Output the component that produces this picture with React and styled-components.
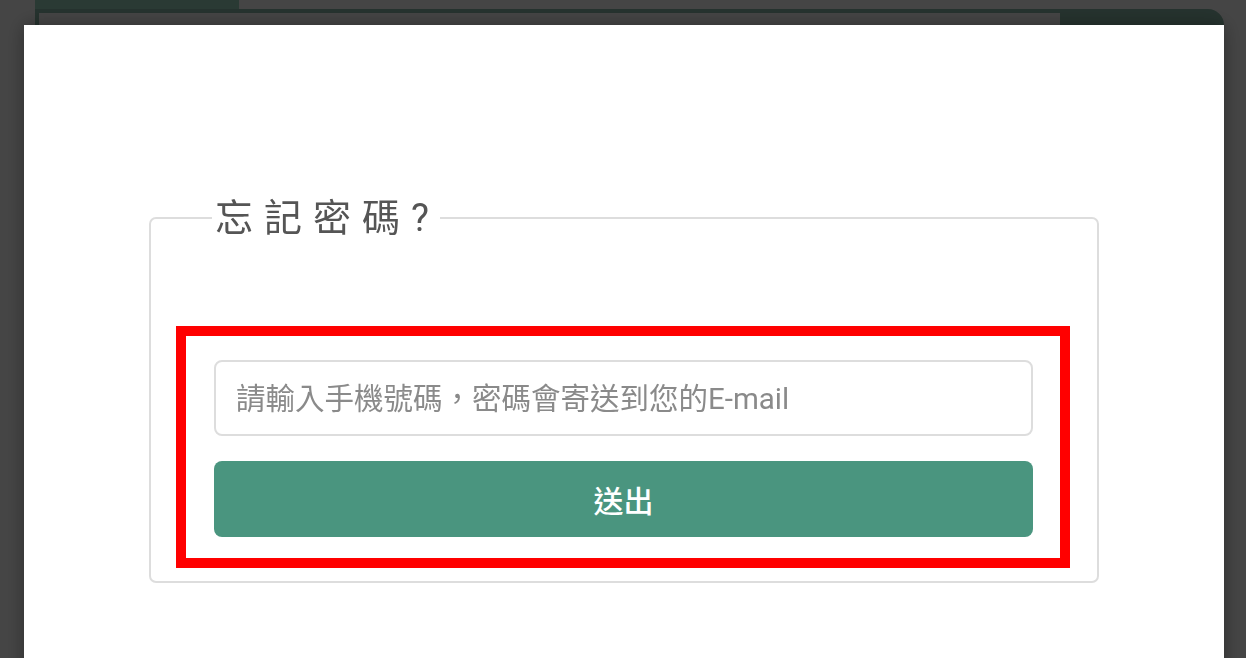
import React from 'react';
import styled, { createGlobalStyle } from 'styled-components';

const GlobalStyle = createGlobalStyle`
  html, body {
    margin: 0;
    padding: 0;
    background: #fff;
    overflow: hidden;
  }
  body {
    font-family: Roboto, 'Noto Sans CJK TC', sans-serif;
  }
`;

export default function App() {
  return (
    <>
      <GlobalStyle />
      <Shell>
        <Sidebar />
        <Main>
          <TopGap />
          <Header>
            <HeaderBar />
          </Header>
        </Main>
      </Shell>
      <Overlay />
      <Modal>
        <Fieldset>
          <Legend>忘記密碼?</Legend>
          <FormBox>
            <Input placeholder="請輸入手機號碼，密碼會寄送到您的E-mail" />
            <Submit type="button">送出</Submit>
          </FormBox>
        </Fieldset>
      </Modal>
    </>
  );
}

const Shell = styled.div`
  display: flex;
  height: 100vh;
  margin-left: 35px;
  width: 1189px;
`;

const Sidebar = styled.div`
  width: 204px;
  background: #9dd6c1;
`;

const Main = styled.div`
  flex: 1;
  display: flex;
  flex-direction: column;
`;

const TopGap = styled.div`
  height: 9px;
`;

const Header = styled.div`
  display: flex;
  background: #8cbcab;
  border-top-right-radius: 16px;
  padding-top: 4px;
  height: 60px;
  margin-left: -204px;
  padding-left: 4px;
`;

const HeaderBar = styled.div`
  width: 1021px;
  height: 100%;
  background: #fff;
`;

const Overlay = styled.div`
  position: fixed;
  inset: 0;
  background: rgba(0, 0, 0, 0.73);
`;

const Modal = styled.div`
  position: fixed;
  left: 24px;
  top: 25px;
  width: 1200px;
  bottom: -40px;
  background: #fff;
  box-shadow: 0 0 18px rgba(0, 0, 0, 0.35);
  display: flex;
  flex-direction: column;
  align-items: center;
  padding-top: 171px;
  box-sizing: border-box;
`;

const Fieldset = styled.fieldset`
  width: 950px;
  box-sizing: border-box;
  margin: 0;
  border: 2px solid #dddddd;
  border-radius: 7px;
  padding: 0 0 13px 25px;
`;

const Legend = styled.legend`
  margin-left: 36px;
  padding: 0 0 0 3px;
  font-family: Roboto, 'Noto Sans CJK TC', sans-serif;
  font-size: 38px;
  line-height: 44px;
  letter-spacing: 11px;
  color: #555;
  font-weight: 400;
`;

const FormBox = styled.div`
  margin-top: 86px;
  width: 894px;
  box-sizing: border-box;
  border: 10px solid #ff0000;
  padding: 24px 27px 21px 28px;
  display: flex;
  flex-direction: column;
  gap: 25px;
`;

const Input = styled.input`
  height: 76px;
  box-sizing: border-box;
  border: 2px solid #dddddd;
  border-radius: 8px;
  padding: 2px 20px 0;
  font-family: Roboto, 'Noto Sans CJK TC', sans-serif;
  font-size: 29.5px;
  color: #333;
  outline: none;

  &::placeholder {
    color: #8a8a8a;
  }
`;

const Submit = styled.button`
  height: 76px;
  border: none;
  border-radius: 8px;
  background: #4a957f;
  color: #fff;
  font-family: Roboto, 'Noto Sans CJK TC', sans-serif;
  font-size: 30px;
  font-weight: 500;
  cursor: pointer;
`;
